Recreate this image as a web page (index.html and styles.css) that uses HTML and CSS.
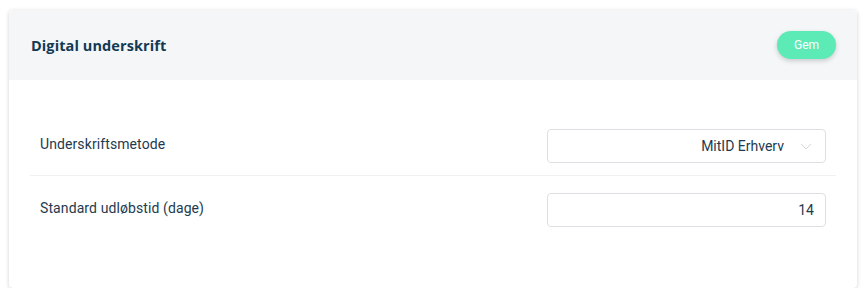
FILE: index.html
```html
<!DOCTYPE html>
<html lang="da">
<head>
<meta charset="utf-8">
<link rel="stylesheet" href="styles.css">
</head>
<body>
<div class="card">
  <div class="card-header">
    <h2 class="title">Digital underskrift</h2>
    <button class="btn-save">Gem</button>
  </div>
  <div class="card-body">
    <div class="row row-first">
      <label class="label">Underskriftsmetode</label>
      <div class="select">
        <span class="select-value">MitID Erhverv</span>
        <svg class="chev" width="12" height="7" viewBox="0 0 12 7"><path d="M1 1l5 5 5-5" fill="none" stroke="#d3d6da" stroke-width="1"/></svg>
      </div>
    </div>
    <div class="row row-second">
      <label class="label">Standard udløbstid (dage)</label>
      <div class="input">14</div>
    </div>
  </div>
</div>
</body>
</html>
```
FILE: styles.css
```css
html, body { margin: 0; padding: 0; background: #fff; }
body { padding: 10px 9px 0 9px; font-family: Roboto, "Liberation Sans", sans-serif; }
.card {
  background: #fff;
  border-radius: 4px;
  box-shadow: 0 1px 4px rgba(0,0,0,0.18);
  height: 278px;
  overflow: hidden;
}
.card-header {
  background: #f4f6f8;
  height: 70px;
  display: flex;
  align-items: center;
  justify-content: space-between;
  padding: 0 21px 0 22px;
}
.title {
  margin: 0;
  font-family: "Open Sans", sans-serif;
  font-weight: 700;
  font-size: 14.5px;
  color: #123a55;
  letter-spacing: 0.1px;
}
.btn-save {
  width: 59px;
  height: 28px;
  border: none;
  border-radius: 14px;
  background: #5ceab6;
  color: #fff;
  font-family: Roboto, sans-serif;
  font-size: 12px;
  box-shadow: 0 2px 5px rgba(0,0,0,0.18);
  margin-top: -1px;
}
.card-body { padding: 37px 21px 0 21px; }
.row {
  display: flex;
  align-items: center;
  justify-content: space-between;
  padding: 0 10px;
}
.row-first { padding-top: 12px; padding-bottom: 12px; border-bottom: 1px solid #eef0f2; }
.row-second { padding-top: 17px; }
.label { font-size: 14px; color: #1e3a4e; margin-bottom: 4px; letter-spacing: 0.1px; }
.select, .input {
  box-sizing: border-box;
  width: 279px;
  height: 34px;
  border: 1px solid #dcdfe3;
  border-radius: 4px;
  display: flex;
  align-items: center;
  justify-content: flex-end;
  font-size: 14px;
  color: #1e3a4e;
}
.select { padding-right: 13px; }
.select-value { margin-right: 16px; }
.input { padding-right: 11px; }
```
